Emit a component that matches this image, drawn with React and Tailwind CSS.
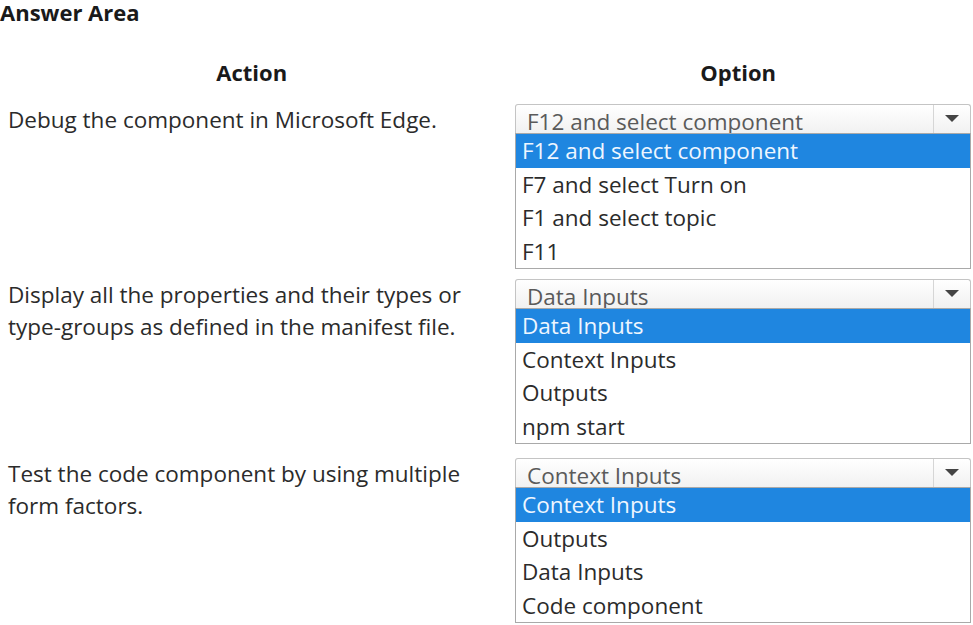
import React from 'react'

const rows = [
  {
    action: ['Debug the component in Microsoft Edge.'],
    value: 'F12 and select component',
    options: ['F12 and select component', 'F7 and select Turn on', 'F1 and select topic', 'F11'],
  },
  {
    action: ['Display all the properties and their types or', 'type-groups as defined in the manifest file.'],
    value: 'Data Inputs',
    options: ['Data Inputs', 'Context Inputs', 'Outputs', 'npm start'],
  },
  {
    action: ['Test the code component by using multiple', 'form factors.'],
    value: 'Context Inputs',
    options: ['Context Inputs', 'Outputs', 'Data Inputs', 'Code component'],
  },
]

// open select: clipped current value on top, option list below
function OpenSelect({ value, options }) {
  return (
    <div className="w-[456px]">
      <div className="flex h-[29px] overflow-hidden rounded-t-[3px] border border-b-0 border-[#c4c4c4] bg-gradient-to-b from-white to-[#f1f1f1]">
        <div className="flex-1 overflow-hidden pl-[11px] pt-[2px] text-[22.5px] leading-[30px] text-[#5a5a5a]">
          {value}
        </div>
        <div className="flex w-[37px] items-start justify-center border-l border-[#d6d6d6] pt-[9px]">
          <svg width="16" height="9" viewBox="0 0 16 9">
            <path d="M1 1h14L8 8z" fill="#444" />
          </svg>
        </div>
      </div>
      <div className="border border-[#a9a9a9] bg-white">
        {options.map((opt, i) => (
          <div
            key={opt}
            className={`h-[33.5px] pl-[6px] text-[22.5px] leading-[33px] ${
              i === 0 ? 'bg-[#1f86e0] text-[#eef6ff]' : 'text-[#2b2b2b]'
            }`}
          >
            {opt}
          </div>
        ))}
      </div>
    </div>
  )
}

export default function App() {
  return (
    <div className="h-[625px] w-[973px] overflow-hidden bg-white text-[#2b2b2b]" style={{ fontFamily: '"Open Sans", "Noto Sans", sans-serif' }}>
      <h1 className="text-[22px] font-bold leading-[24px] text-[#1a1a1a]">Answer Area</h1>

      <div className="mt-[32px] flex h-[34px] text-[22px] font-bold leading-[32px] text-[#1a1a1a]">
        <div className="w-[507px] text-center">Action</div>
        <div className="w-[473px] text-center">Option</div>
      </div>

      <div className="mt-[14px] flex flex-col gap-[10px]">
        {rows.map((row, i) => (
          <div key={i} className={`flex ${i === 2 ? 'mt-[4px]' : ''}`}>
            <div className="w-[515px] pl-[8px] text-[22.5px] leading-[32px]">
              {row.action.map((line) => (
                <div key={line}>{line}</div>
              ))}
            </div>
            <OpenSelect value={row.value} options={row.options} />
          </div>
        ))}
      </div>
    </div>
  )
}
